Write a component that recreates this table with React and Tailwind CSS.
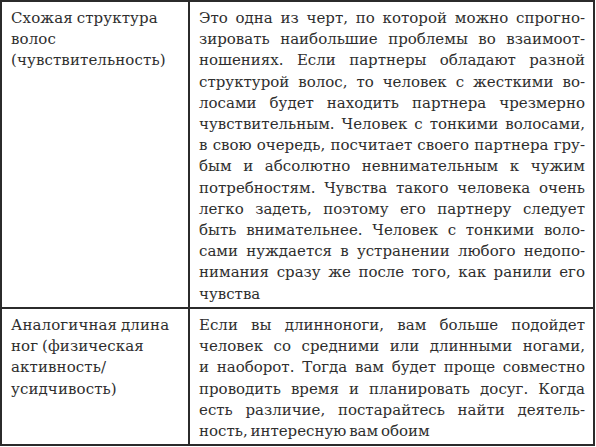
const rows = [
  {
    label: ['Схожая структура', 'волос', '(чувствительность)'],
    text: [
      'Это одна из черт, по которой можно спрогно-',
      'зировать наибольшие проблемы во взаимоот-',
      'ношениях. Если партнеры обладают разной',
      'структурой волос, то человек с жесткими во-',
      'лосами будет находить партнера чрезмерно',
      'чувствительным. Человек с тонкими волосами,',
      'в свою очередь, посчитает своего партнера гру-',
      'бым и абсолютно невнимательным к чужим',
      'потребностям. Чувства такого человека очень',
      'легко задеть, поэтому его партнеру следует',
      'быть внимательнее. Человек с тонкими воло-',
      'сами нуждается в устранении любого недопо-',
      'нимания сразу же после того, как ранили его',
      'чувства',
    ],
    height: 'h-[305px]',
  },
  {
    label: ['Аналогичная длина', 'ног (физическая', 'активность/', 'усидчивость)'],
    text: [
      'Если вы длинноноги, вам больше подойдет',
      'человек со средними или длинными ногами,',
      'и наоборот. Тогда вам будет проще совместно',
      'проводить время и планировать досуг. Когда',
      'есть различие, постарайтесь найти деятель-',
      'ность, интересную вам обоим',
    ],
    height: 'flex-1',
  },
];

function Cell({ lines, justify }) {
  return (
    <div>
      {lines.map((line, i) => {
        const last = i === lines.length - 1;
        return (
          <div
            key={i}
            className={
              justify && !last
                ? 'text-justify [text-align-last:justify] whitespace-nowrap'
                : 'whitespace-nowrap'
            }
          >
            {line}
          </div>
        );
      })}
    </div>
  );
}

export default function App() {
  return (
    <div className="w-[596px] h-[447px] bg-white">
      <div className="w-[595px] h-[446px] border-2 border-[#2b2b2b] flex flex-col text-[#2e2e2e] text-[15px] leading-[21.2px] font-['DejaVu_Serif',serif]">
        {rows.map((row, i) => (
          <div
            key={i}
            className={`flex ${row.height} ${i > 0 ? 'border-t-2 border-[#2b2b2b]' : ''}`}
          >
            <div className="w-[188px] shrink-0 border-r-2 border-[#2b2b2b] pl-[9px] pt-[6px] tracking-[0.1px] [word-spacing:-1px]">
              <Cell lines={row.label} />
            </div>
            <div className="flex-1 pl-[9px] pr-[8px] pt-[6px] [word-spacing:-2px]">
              <Cell lines={row.text} justify />
            </div>
          </div>
        ))}
      </div>
    </div>
  );
}
